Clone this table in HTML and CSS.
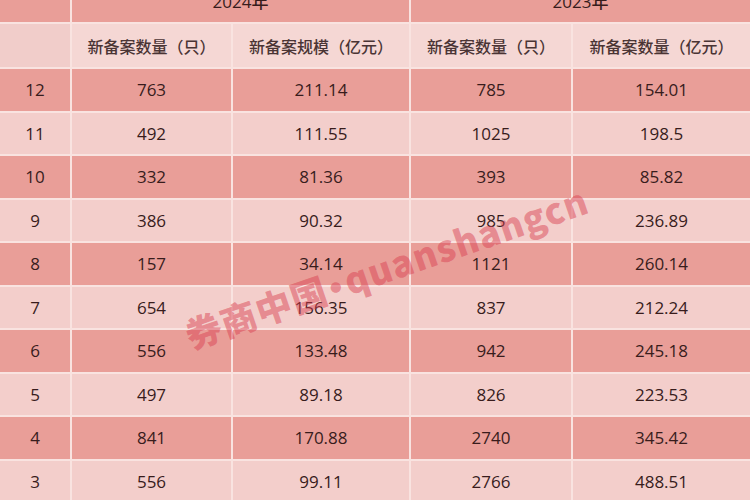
FILE: index.html
```html
<!DOCTYPE html>
<html lang="zh">
<head>
<meta charset="utf-8">
<link rel="stylesheet" href="styles.css">
</head>
<body>
<div class="page">
  <div class="grid">
    <div class="cell dark"></div>
    <div class="cell dark year span2">2024年</div>
    <div class="cell dark year span2">2023年</div>

    <div class="cell sub first"></div>
    <div class="cell sub">新备案数量（只）</div>
    <div class="cell sub">新备案规模（亿元）</div>
    <div class="cell sub">新备案数量（只）</div>
    <div class="cell sub">新备案数量（亿元）</div>

    <div class="cell dark">12</div><div class="cell dark">763</div><div class="cell dark">211.14</div><div class="cell dark">785</div><div class="cell dark">154.01</div>
    <div class="cell light">11</div><div class="cell light">492</div><div class="cell light">111.55</div><div class="cell light">1025</div><div class="cell light">198.5</div>
    <div class="cell dark">10</div><div class="cell dark">332</div><div class="cell dark">81.36</div><div class="cell dark">393</div><div class="cell dark">85.82</div>
    <div class="cell light">9</div><div class="cell light">386</div><div class="cell light">90.32</div><div class="cell light">985</div><div class="cell light">236.89</div>
    <div class="cell dark">8</div><div class="cell dark">157</div><div class="cell dark">34.14</div><div class="cell dark">1121</div><div class="cell dark">260.14</div>
    <div class="cell light">7</div><div class="cell light">654</div><div class="cell light">156.35</div><div class="cell light">837</div><div class="cell light">212.24</div>
    <div class="cell dark">6</div><div class="cell dark">556</div><div class="cell dark">133.48</div><div class="cell dark">942</div><div class="cell dark">245.18</div>
    <div class="cell light">5</div><div class="cell light">497</div><div class="cell light">89.18</div><div class="cell light">826</div><div class="cell light">223.53</div>
    <div class="cell dark">4</div><div class="cell dark">841</div><div class="cell dark">170.88</div><div class="cell dark">2740</div><div class="cell dark">345.42</div>
    <div class="cell light">3</div><div class="cell light">556</div><div class="cell light">99.11</div><div class="cell light">2766</div><div class="cell light">488.51</div>
  </div>
  <div class="watermark">券商中国<span class="dot">•</span>quanshangcn</div>
</div>
</body>
</html>
```
FILE: styles.css
```css
html, body {
  margin: 0;
  padding: 0;
  width: 750px;
  height: 500px;
  overflow: hidden;
  background: #f2cdca;
}
.page {
  position: relative;
  width: 750px;
  height: 500px;
  overflow: hidden;
}
.grid {
  display: grid;
  grid-template-columns: 70px 159px 176px 160px 177px;
  grid-auto-rows: 41.5px;
  grid-template-rows: 43px 43px;
  gap: 2px;
  background: #f9e3e0;
  margin-top: -21px;
  font-family: "Open Sans", "Noto Sans CJK SC", sans-serif;
  font-size: 17px;
  font-weight: 500;
  color: #381c1c;
}
.cell {
  display: flex;
  align-items: center;
  justify-content: center;
}
.span2 {
  grid-column: span 2;
}
.dark { background: #e99e98; }
.light { background: #f3cecb; }
.sub {
  background: #f5d7d4;
  font-family: "Noto Sans CJK SC", sans-serif;
  font-size: 16px;
  font-weight: 500;
  color: #4a3434;
}
.sub.first { background: #f1cdca; }
.year {
  font-size: 17px;
  align-items: flex-end;
  padding-bottom: 9px;
  box-sizing: border-box;
}
.watermark {
  position: absolute;
  left: 386px;
  top: 266px;
  transform: translate(-50%, -50%) rotate(-19deg);
  white-space: nowrap;
  font-family: "Noto Sans CJK SC", sans-serif;
  font-weight: 900;
  font-size: 36px;
  color: rgba(216, 64, 80, 0.48);
  letter-spacing: 1px;
}
.dot {
  font-family: "Liberation Sans", sans-serif;
  font-weight: 700;
  margin: 0 3px;
}
```
